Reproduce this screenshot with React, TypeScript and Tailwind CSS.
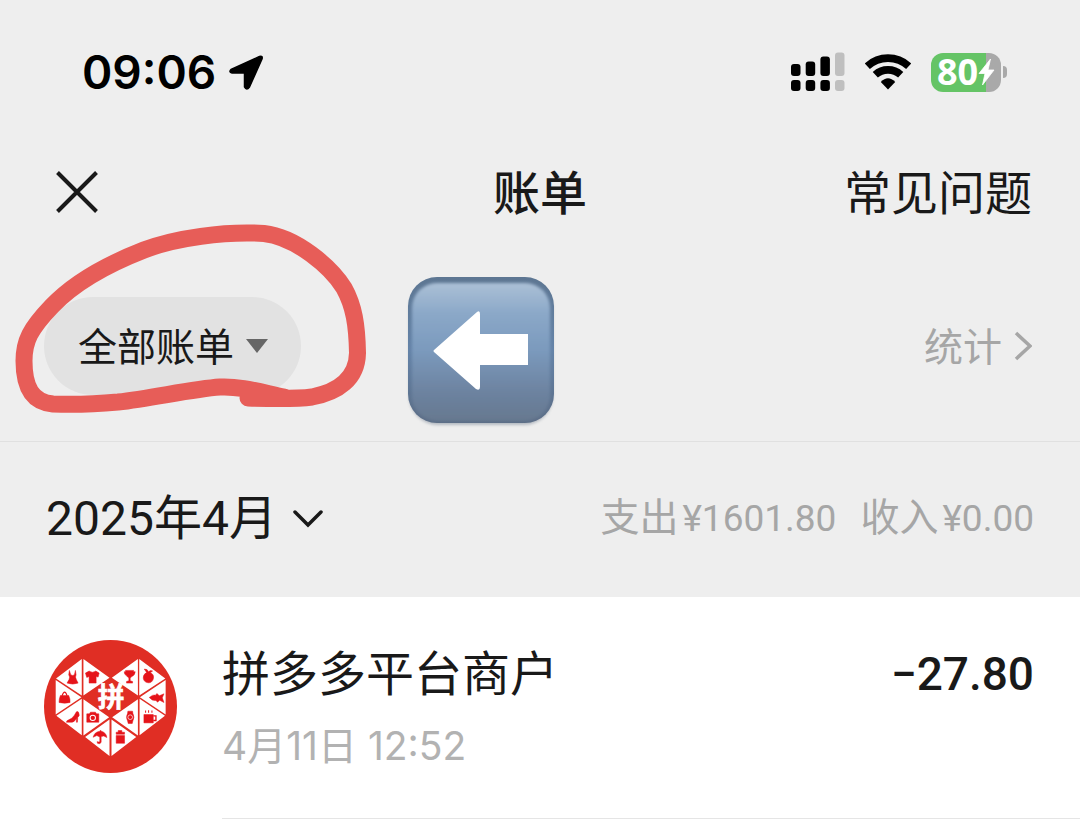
import React from "react";

const SANS = "font-['Inter','Noto_Sans_CJK_SC',sans-serif]";
const NUMERIC = "font-['Roboto','Noto_Sans_CJK_SC',sans-serif]";

function LocationArrow() {
  return (
    <svg viewBox="0 0 36 37" className="h-[37px] w-9" aria-hidden="true">
      <path d="M31.500 2.500 L3 15.500 Q0.500 18.500 4 19 H16.500 V33 Q18.500 37 21.500 33 L34 5 Q35 1.500 31.500 2.500 Z" fill="#000" stroke="#000" strokeWidth="1.500" strokeLinejoin="round" />
    </svg>
  );
}

function SignalBars() {
  return (
    <svg viewBox="0 0 54 40" className="h-10 w-[54px]" role="img" aria-label="信号">
      <g fill="#000">
        <rect x="0" y="12" width="9.500" height="12" rx="3" />
        <rect x="14.700" y="9.500" width="9.500" height="14.500" rx="3" />
        <rect x="29.400" y="4.500" width="9.500" height="19.500" rx="3" />
        <rect x="0" y="28" width="9.500" height="11" rx="3" />
        <rect x="14.700" y="28" width="9.500" height="11" rx="3" />
        <rect x="29.400" y="28" width="9.500" height="11" rx="3" />
      </g>
      <g fill="#bfbfbf">
        <rect x="44" y="0.500" width="9.500" height="23.500" rx="3" />
        <rect x="44" y="28" width="9.500" height="11" rx="3" />
      </g>
    </svg>
  );
}

function Wifi() {
  return (
    <svg viewBox="0 0 46 36" className="h-9 w-[46px]" role="img" aria-label="Wi-Fi">
      <g fill="none" stroke="#000" strokeWidth="7.600">
        <path d="M2.300 12.200 A30.500 30.500 0 0 1 43.700 12.200" />
        <path d="M10.300 20.800 A18.800 18.800 0 0 1 35.700 20.800" />
      </g>
      <path d="M23 35.500 L15.800 28 Q23 20.500 30.200 28 Z" fill="#000" />
    </svg>
  );
}

function Battery() {
  return (
    <div className="flex items-center gap-[2px]">
      <div className="flex h-[39px] w-[70px] items-center rounded-xl bg-linear-to-r from-[#65c466] from-78% to-[#a9a9a9] to-78% pl-[6px]">
        <span className="font-['Noto_Sans',sans-serif] text-[36px] leading-none font-bold text-white">80</span>
        <svg viewBox="0 0 17 28" className="h-7 w-[17px] shrink-0" aria-hidden="true">
          <path d="M12.500 1 L1 15.500 H7 L4.500 27 L16 12 H10 Z" fill="#fff" stroke="#fff" strokeWidth="0.800" strokeLinejoin="round" />
        </svg>
      </div>
      <div className="h-3 w-1 rounded-r-full bg-[#a9a9a9]" />
    </div>
  );
}

function ArrowKey() {
  return (
    <svg viewBox="0 0 156 156" className="h-[156px] w-[156px]" role="img" aria-label="向左箭头">
      <defs>
        <linearGradient id="keyEdge" x1="0" y1="0" x2="0" y2="1">
          <stop offset="0" stopColor="#5d7692" />
          <stop offset="0.500" stopColor="#6483a8" />
          <stop offset="1" stopColor="#5a6c85" />
        </linearGradient>
        <linearGradient id="keyFace" x1="0" y1="0" x2="0" y2="1">
          <stop offset="0" stopColor="#abc0d6" />
          <stop offset="0.220" stopColor="#8ba8c8" />
          <stop offset="0.480" stopColor="#7b9abd" />
          <stop offset="0.800" stopColor="#6c829f" />
          <stop offset="1" stopColor="#66788f" />
        </linearGradient>
        <filter id="keySoft" x="-10%" y="-10%" width="120%" height="120%">
          <feGaussianBlur stdDeviation="1.800" />
        </filter>
        <clipPath id="keyClip">
          <rect x="5" y="4" width="146" height="146" rx="29" />
        </clipPath>
      </defs>
      <rect x="6" y="7" width="144" height="145" rx="29" fill="#8c96a3" opacity="0.600" filter="url(#keySoft)" />
      <rect x="5" y="4" width="146" height="146" rx="29" fill="url(#keyEdge)" />
      <g clipPath="url(#keyClip)">
        <rect x="9" y="10" width="138" height="138" rx="25" fill="url(#keyFace)" filter="url(#keySoft)" />
      </g>
      <path d="M31 77 L74 39 Q77 37 77 41 V61 H125 V92 H77 V114 Q77 118 73 116 L31 79 Q30 78 31 77 Z" fill="#fff" />
    </svg>
  );
}

function MerchantLogo() {
  return (
    <svg viewBox="43 45 398 398" className="h-[133px] w-[133px] shrink-0" role="img" aria-label="拼多多">
      <circle cx="242" cy="244" r="199" fill="#e02e24" />
      <g fill="#fff">
        <path d="M156 102 V211 L79 160 Z M78 165 L155 216 L78 268 Z M156 221 V330 L80 272 Z" />
        <path d="M161 102 V211 L239 158 Z M161 222 V331 L238 276 Z M166 335 L239 283 V392 Z" />
        <path d="M328 102 V211 L406 160 Z M407 165 L330 216 L407 268 Z M329 221 V330 L405 272 Z" />
        <path d="M324 102 V211 L246 158 Z M324 222 V331 L247 276 Z M319 335 L245 283 V392 Z" />
      </g>
      <g fill="#e5141a" stroke="#e5141a" strokeWidth="1.500">
        <path d="M119 136 L123 149 Q129 153 134 149 L137 136 L139 149 Q135 156 140 164 L145 174 Q129 180 112 174 L118 163 Q122 156 117 149 Z" />
        <path d="M178 138 Q188 145 198 138 L208 144 L205 156 L199 154 V174 H178 V154 L171 157 L167 144 Z" />
        <path d="M287 136 H311 V140 H316 Q315 151 306 154 L301 159 V167 L308 169 V174 H290 V169 L297 167 V159 Q292 155 290 152 Q283 149 283 140 H287 Z" />
        <path d="M343 132 Q353 131 356 140 Q362 134 368 138 L361 143 Q374 148 370 162 Q366 174 355 173 Q342 172 340 159 Q339 148 350 142 Z" />
        <path d="M92 211 H117 Q122 222 121 232 Q105 236 88 232 Q88 221 92 211 Z" />
        <path d="M358 217 Q369 207 377 210 L381 205 L388 212 L402 206 L397 218 L402 232 L389 225 L383 231 L378 226 Q367 228 358 217 Z" />
        <path d="M140 260 Q145 257 147 263 Q151 274 144 276 L143 291 H140 V279 Q134 291 127 291 H110 Q110 286 117 284 Q127 281 134 270 Z" />
        <path d="M171 266 H179 L182 261 H197 L200 266 H207 V291 H171 Z" />
        <path d="M294 258 H308 L309 265 Q315 276 309 287 L307 295 H295 L293 287 Q287 276 293 265 Z" />
        <path d="M342 268 H370 V293 H342 Z" />
        <path d="M190 336 Q194 320 210 318 L212 315 L215 318 Q230 323 231 337 L222 332 L214 334 V350 Q212 358 203 354 L202 349 Q209 353 210 347 V335 L201 331 Z" />
        <path d="M265 316 H276 V321 H284 V327 H259 V321 H265 Z M259 331 H284 V354 H259 Z" />
      </g>
      <path d="M97 212 Q105 190 112 212" fill="none" stroke="#e5141a" strokeWidth="3.500" />
      <path d="M370 272 H378 V286 H370" fill="none" stroke="#e5141a" strokeWidth="4" />
      <path d="M347 256 V263 M356 255 V263 M366 256 V263" fill="none" stroke="#e5141a" strokeWidth="3" />
      <circle cx="189" cy="278" r="8" fill="none" stroke="#fff" strokeWidth="3" />
      <circle cx="301" cy="276" r="7" fill="none" stroke="#fff" strokeWidth="2" />
      <text x="244" y="247" textAnchor="middle" fill="#fff" stroke="#fff" strokeWidth="2" fontSize="80" className="font-['Noto_Sans_CJK_SC',sans-serif] font-bold">拼</text>
    </svg>
  );
}

function CircleMark() {
  return (
    <svg viewBox="0 210 390 220" className="pointer-events-none absolute top-[-30px] left-0 h-[220px] w-[390px]" aria-hidden="true">
      <path
        d="M248 398 C280 399 298 399 312 397 C338 392 357 379 357.500 353 C357 325 354 306 344 288 C331 267 296 237 264 233.500 C225 231 175 238 144 250 C108 264 74 283 52 306 C30 329 24 341 24 361 C24 387 32 402 53 404 C77 405 96 404 118 402 C153 398 192 389 220 387 C240 386 260 392 284 397"
        fill="none"
        stroke="#e75d58"
        strokeWidth="17"
        strokeLinecap="round"
        strokeLinejoin="round"
      />
    </svg>
  );
}

function StatusBar() {
  return (
    <div className="flex h-36 items-center justify-between pr-[73px] pl-[82px]">
      <div className="flex items-center gap-3">
        <span className="text-[46px] leading-none font-semibold text-black">09:06</span>
        <LocationArrow />
      </div>
      <div className="flex items-center gap-5">
        <SignalBars />
        <Wifi />
        <Battery />
      </div>
    </div>
  );
}

function NavBar() {
  return (
    <header className="grid h-24 grid-cols-[1fr_auto_1fr] items-center px-12">
      <button type="button" aria-label="关闭" className="ml-2 justify-self-start">
        <svg viewBox="0 0 42 42" className="h-[42px] w-[42px]" aria-hidden="true">
          <path d="M1.500 1.500 L40.500 40.500 M40.500 1.500 L1.500 40.500" stroke="#191919" strokeWidth="4" fill="none" />
        </svg>
      </button>
      <h1 className="text-[47px] leading-none font-medium">账单</h1>
      <a href="#help" className="justify-self-end text-[47px] leading-none">常见问题</a>
    </header>
  );
}

function FilterBar() {
  return (
    <div className="relative flex h-[202px] items-start justify-between border-b border-[#e0e0e0] pt-[33px] pr-12 pl-11">
      <div className="flex items-start gap-[102px]">
        <button type="button" className="mt-6 flex h-[98px] items-center gap-3 rounded-full bg-[#e2e2e2] pr-[33px] pl-[34px] text-[39px] leading-none">
          全部账单
          <svg viewBox="0 0 22 14" className="h-[14px] w-[22px]" aria-hidden="true">
            <path d="M0 0 H22 L11 14 Z" fill="#666" />
          </svg>
        </button>
        <ArrowKey />
      </div>
      <a href="#stats" className="mt-6 flex h-[98px] items-center gap-3 text-[39px] leading-none text-[#a6a6a6]">
        统计
        <svg viewBox="0 0 18 30" className="h-[30px] w-[18px]" aria-hidden="true">
          <path d="M2 2 L16 15 L2 28" fill="none" stroke="#a6a6a6" strokeWidth="3.500" />
        </svg>
      </a>
      <CircleMark />
    </div>
  );
}

function MonthSummary() {
  return (
    <div className={`flex h-[155px] items-center justify-between px-[46px] pb-[2px] ${NUMERIC}`}>
      <button type="button" className="flex items-center gap-4 text-[48px] leading-none">
        2025年4月
        <svg viewBox="0 0 30 18" className="h-[18px] w-[30px]" aria-hidden="true">
          <path d="M2 2 L15 15 L28 2" fill="none" stroke="#191919" strokeWidth="3.500" strokeLinecap="round" />
        </svg>
      </button>
      <p className="flex gap-6 text-[39px] leading-none text-[#a6a6a6]">
        <span className="flex items-baseline gap-1">支出<span className="text-[37px]">¥1601.80</span></span>
        <span className="flex items-baseline gap-1">收入<span className="text-[37px]">¥0.00</span></span>
      </p>
    </div>
  );
}

function Transaction() {
  return (
    <li className="flex pl-11">
      <div className="pt-[43px]">
        <MerchantLogo />
      </div>
      <a href="#detail" className="ml-[45px] flex h-[222px] flex-1 items-start justify-between border-b border-[#e5e5e5] pt-[53px] pr-[46px]">
        <div className="flex flex-col gap-7">
          <span className="text-[48px] leading-none">拼多多平台商户</span>
          <time className="text-[39px] leading-none text-[#b2b2b2]">4月11日 12:52</time>
        </div>
        <span className={`text-[46px] leading-[48px] font-medium ${NUMERIC}`}>−27.80</span>
      </a>
    </li>
  );
}

export default function App() {
  return (
    <main className={`min-h-screen bg-white text-[#191919] ${SANS}`}>
      <div className="bg-[#eeeeee]">
        <StatusBar />
        <NavBar />
        <FilterBar />
        <MonthSummary />
      </div>
      <ul>
        <Transaction />
      </ul>
    </main>
  );
}
